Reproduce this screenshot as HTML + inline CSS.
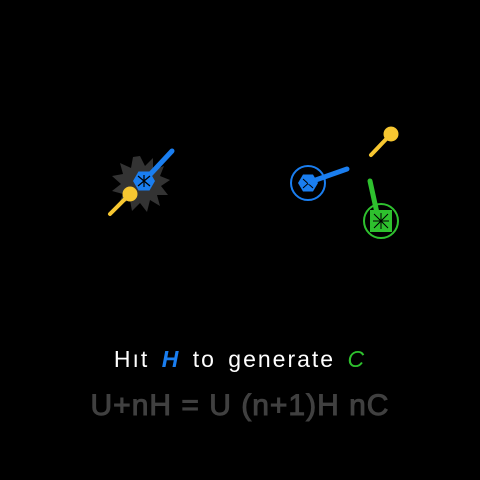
<!DOCTYPE html>
<html><head><style>
html,body{margin:0;padding:0;background:#000;width:480px;height:480px;overflow:hidden}
.t{position:absolute;left:0;width:480px;text-align:center;font-family:"Liberation Sans",sans-serif}
</style></head><body>
<svg width="480" height="480" style="position:absolute;left:0;top:0">
<polygon fill="#333" points="140,156 145,166 153,158 153,170 164,166 160,176 170,180 161,186 168,195 157,195 160,206 150,200 147,212 140,203 132,211 130,200 119,204 123,194 112,191 121,184 112,176 123,174 120,163 131,168 133,157"/>
<line x1="144" y1="181" x2="172" y2="151" stroke="#1a7ef0" stroke-width="5" stroke-linecap="round"/>
<polygon fill="#1a7ef0" points="155,181 149.5,190.5 138.5,190.5 133,181 138.5,171.5 149.5,171.5"/>
<g stroke="#000" stroke-width="1.2"><line x1="138" y1="176" x2="150" y2="186"/><line x1="150" y1="176" x2="138" y2="186"/><line x1="144" y1="175" x2="144" y2="187"/></g>
<line x1="130" y1="194" x2="110" y2="214" stroke="#f7c731" stroke-width="4" stroke-linecap="round"/>
<circle cx="130" cy="194" r="7.5" fill="#f7c731"/>
<circle cx="308" cy="183" r="17" fill="none" stroke="#1a7ef0" stroke-width="2"/>
<polygon fill="#1a7ef0" points="318,183 313,191.5 303,191.5 298,183 303,174.5 313,174.5"/>
<g stroke="#000" stroke-width="1"><line x1="303" y1="179" x2="313" y2="188"/><line x1="313" y1="179" x2="303" y2="188"/></g>
<line x1="310" y1="182" x2="347" y2="169" stroke="#1a7ef0" stroke-width="5" stroke-linecap="round"/>
<line x1="391" y1="134" x2="371" y2="155" stroke="#f7c731" stroke-width="4" stroke-linecap="round"/>
<circle cx="391" cy="134" r="7.5" fill="#f7c731"/>
<circle cx="381" cy="221" r="17" fill="none" stroke="#2ec12e" stroke-width="2"/>
<line x1="370" y1="181" x2="377" y2="213" stroke="#2ec12e" stroke-width="5" stroke-linecap="round"/>
<rect x="370" y="210" width="22" height="22" fill="#2ec12e"/>
<g stroke="#000" stroke-width="1"><line x1="374" y1="214" x2="388" y2="228"/><line x1="388" y1="214" x2="374" y2="228"/><line x1="381" y1="213" x2="381" y2="229"/><line x1="373" y1="221" x2="389" y2="221"/></g>
</svg>
<div class="t" style="top:346px;font-size:23px;color:#fff;letter-spacing:2px;word-spacing:4px">Hıt <span style="color:#1a7ef0;font-weight:bold;font-style:italic">H</span> to generate <span style="color:#2ec12e;font-style:italic">C</span></div>
<div class="t" style="top:389px;font-size:30px;color:#404040;letter-spacing:1px;-webkit-text-stroke:1px #404040">U+nH = U (n+1)H nC</div>
</body></html>
